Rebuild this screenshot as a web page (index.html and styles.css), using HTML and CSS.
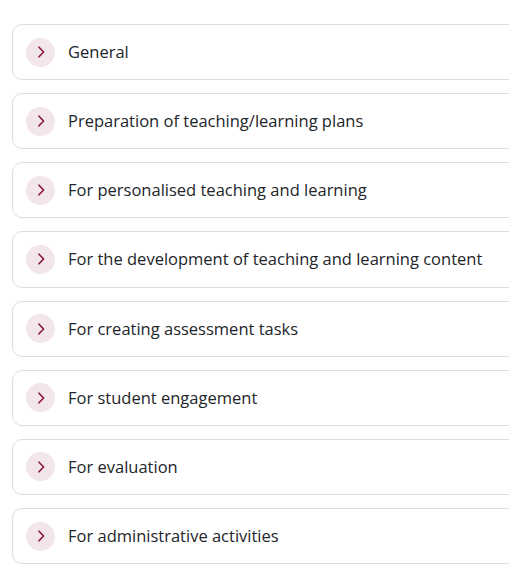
FILE: index.html
```html
<!DOCTYPE html>
<html lang="en">
<head>
<meta charset="utf-8">
<title>Categories</title>
<link rel="stylesheet" href="styles.css">
</head>
<body>
<div class="list">
  <div class="item"><span class="toggle"><svg viewBox="0 0 12 12" width="12" height="12"><path d="M4 1.2 L8.6 6 L4 10.8" /></svg></span><span class="label">General</span></div>
  <div class="item"><span class="toggle"><svg viewBox="0 0 12 12" width="12" height="12"><path d="M4 1.2 L8.6 6 L4 10.8" /></svg></span><span class="label">Preparation of teaching/learning plans</span></div>
  <div class="item"><span class="toggle"><svg viewBox="0 0 12 12" width="12" height="12"><path d="M4 1.2 L8.6 6 L4 10.8" /></svg></span><span class="label">For personalised teaching and learning</span></div>
  <div class="item"><span class="toggle"><svg viewBox="0 0 12 12" width="12" height="12"><path d="M4 1.2 L8.6 6 L4 10.8" /></svg></span><span class="label">For the development of teaching and learning content</span></div>
  <div class="item"><span class="toggle"><svg viewBox="0 0 12 12" width="12" height="12"><path d="M4 1.2 L8.6 6 L4 10.8" /></svg></span><span class="label">For creating assessment tasks</span></div>
  <div class="item"><span class="toggle"><svg viewBox="0 0 12 12" width="12" height="12"><path d="M4 1.2 L8.6 6 L4 10.8" /></svg></span><span class="label">For student engagement</span></div>
  <div class="item"><span class="toggle"><svg viewBox="0 0 12 12" width="12" height="12"><path d="M4 1.2 L8.6 6 L4 10.8" /></svg></span><span class="label">For evaluation</span></div>
  <div class="item"><span class="toggle"><svg viewBox="0 0 12 12" width="12" height="12"><path d="M4 1.2 L8.6 6 L4 10.8" /></svg></span><span class="label">For administrative activities</span></div>
</div>
</body>
</html>
```
FILE: styles.css
```css
html, body {
  margin: 0;
  padding: 0;
  overflow: hidden;
  background: #ffffff;
}
body {
  font-family: "Open Sans", "Liberation Sans", sans-serif;
  color: #222529;
}
.list {
  display: flex;
  flex-direction: column;
  gap: 13px;
  padding: 24px 0 0 12px;
  width: 520px;
}
.item {
  display: flex;
  align-items: center;
  height: 56.15px;
  box-sizing: border-box;
  border: 1px solid #dedde3;
  border-radius: 10px;
  padding-left: 13px;
}
.toggle {
  flex: none;
  width: 29px;
  height: 29px;
  border-radius: 50%;
  background: #f2e6ec;
  display: flex;
  align-items: center;
  justify-content: center;
  margin-right: 13px;
}
.toggle svg {
  fill: none;
  stroke: #8a1538;
  stroke-width: 1.6;
  stroke-linecap: round;
  stroke-linejoin: round;
}
.label {
  font-size: 16.5px;
  line-height: 20px;
}
```
